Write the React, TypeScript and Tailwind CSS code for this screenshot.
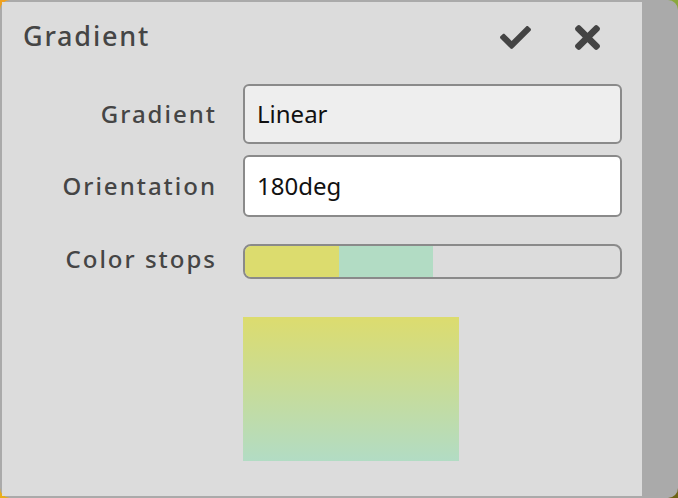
import { FaCheck, FaTimes } from 'react-icons/fa';

const stops = [
  { color: '#dcdc6e', width: 94 },
  { color: '#b2dcc4', width: 94 },
];

export default function App() {
  return (
    <div className="w-[678px] h-[498px] bg-[conic-gradient(from_45deg,#8cb040,#6b5a10,#e8b018,#f0a020,#8cb040)]">
      <div
        className="w-full h-full rounded-[10px] bg-[#aaaaaa] pt-[2px] pl-[2px] pb-[2px] pr-[36px]"
        style={{ fontFamily: '"Noto Sans", "Open Sans", sans-serif' }}
      >
        <div className="h-full bg-[#dcdcdc] flex flex-col">
          {/* Header */}
          <div className="flex items-center h-[70px] pl-[21px] pr-[42px] -mt-[1px]">
            <h1 className="text-[27px] font-medium tracking-[1.8px] text-[#454545] flex-1">Gradient</h1>
            <button className="text-[#444] mr-[44px] mt-[2px]">
              <FaCheck className="w-[31px] h-[31px]" />
            </button>
            <button className="text-[#444] mt-[2px]">
              <FaTimes className="w-[25px] h-[37px]" />
            </button>
          </div>

          {/* Form */}
          <div className="flex flex-col pl-[22px] mt-[13px]">
            <div className="flex items-center h-[60px]">
              <label className="w-[194px] text-right pr-[1px] text-[24px] font-medium tracking-[2px] text-[#454545]">Gradient</label>
              <div className="ml-[25px] w-[379px] h-[60px] border-2 border-[#8a8a8a] rounded-[6px] bg-[#eeeeee] flex items-center px-[12px] text-[24px] text-[#111]">
                Linear
              </div>
            </div>
            <div className="flex items-center h-[62px] mt-[11px]">
              <label className="w-[194px] text-right pr-[1px] text-[24px] font-medium tracking-[2px] text-[#454545]">Orientation</label>
              <div className="ml-[25px] w-[379px] h-[62px] border-2 border-[#8a8a8a] rounded-[6px] bg-white flex items-center px-[12px] text-[24px] text-[#111]">
                180deg
              </div>
            </div>
            <div className="flex items-center h-[35px] mt-[27px]">
              <label className="w-[194px] text-right pr-[1px] text-[24px] font-medium tracking-[2px] text-[#454545] -mt-[5px]">Color stops</label>
              <div className="ml-[25px] w-[379px] h-[35px] border-2 border-[#8a8a8a] rounded-[8px] bg-[#dcdcdc] flex overflow-hidden">
                {stops.map((s, i) => (
                  <div key={i} className="h-full" style={{ width: s.width, backgroundColor: s.color }} />
                ))}
              </div>
            </div>
            <div className="ml-[219px] mt-[38px] w-[216px] h-[144px] bg-[linear-gradient(180deg,#dcdc6e,#b2dcc4)]" />
          </div>
        </div>
      </div>
    </div>
  );
}
